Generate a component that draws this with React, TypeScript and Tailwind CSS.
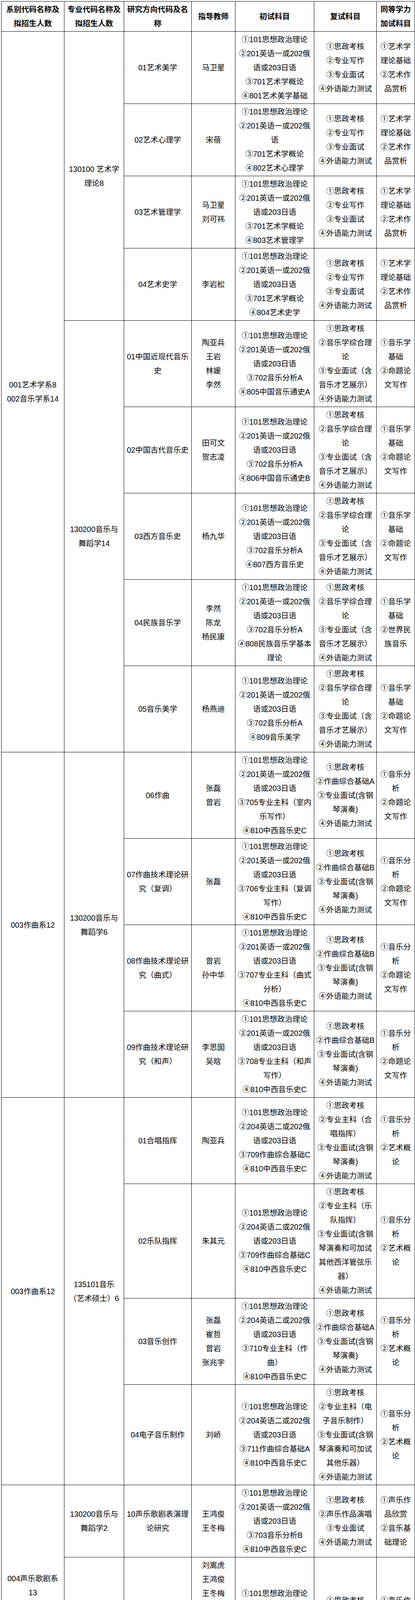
import React from 'react';

type Row = {
  dir: string[];
  teachers: string[];
  exam?: string[];
  retest?: string[];
  extra?: string[];
};

type Major = {
  name: string[];
  rows: Row[];
  shared?: { exam: string[]; retest: string[]; extra: string[] };
};

type Dept = { name: string[]; majors: Major[] };

const P1 = '①101思想政治理论';
const E1 = ['②201英语一或202俄', '语或203日语'];
const E2 = ['②204英语二或202俄', '语或203日语'];
const HIST = '④810中西音乐史C';

const ART_RE = ['①思政考核', '②专业写作', '③专业面试', '④外语能力测试'];
const ART_ADD = ['①艺术学', '理论基础', '②艺术作', '品赏析'];
const MUS_RE = ['①思政考核', '②音乐学综合理', '论', '③专业面试（含', '音乐才艺展示）', '④外语能力测试'];
const MUS_ADD = ['①音乐学', '基础', '②命题论', '文写作'];
const COMP_RE_A = ['①思政考核', '②作曲综合基础A', '③专业面试(含钢', '琴演奏)', '④外语能力测试'];
const COMP_RE_B = ['①思政考核', '②作曲综合基础B', '③专业面试(含钢', '琴演奏)', '④外语能力测试'];
const COMP_ADD = ['①音乐分', '析', '②命题论', '文写作'];
const MFA_ADD = ['①音乐分', '析', '②艺术概', '论'];
const VOC_RE = ['①思政考核', '②声乐作品演唱', '③专业面试', '④外语能力测试'];
const VOC_MFA_RE = ['①思政考核', '②专业主科（声', '乐演唱）', '③外语能力测试'];
const VOC_ADD = ['①声乐作', '品欣赏', '②音乐基', '础理论'];
const INS_RE = ['①思政考核', '②器乐作品演奏', '③专业面试', '④外语能力测试'];
const INS_MFA_RE = ['①思政考核', '②专业主科（器', '乐演奏）', '③外语能力测试'];
const INS_ADD = ['①器乐作', '品欣赏', '②音乐基', '础理论'];

const EXAM_B1 = [P1, ...E1, '③703音乐分析B', HIST];
const EXAM_B2 = [P1, ...E2, '③703音乐分析B', HIST];

const DEPTS: Dept[] = [
  {
    name: ['001艺术学系8', '002音乐学系14'],
    majors: [
      {
        name: ['130100 艺术学', '理论8'],
        rows: [
          { dir: ['01艺术美学'], teachers: ['马卫星'], exam: [P1, ...E1, '③701艺术学概论', '④801艺术美学基础'], retest: ART_RE, extra: ART_ADD },
          { dir: ['02艺术心理学'], teachers: ['宋蓓'], exam: [P1, '②201英语一或202俄', '语', '③701艺术学概论', '④802艺术心理学'], retest: ART_RE, extra: ART_ADD },
          { dir: ['03艺术管理学'], teachers: ['马卫星', '刘可祎'], exam: [P1, ...E1, '③701艺术学概论', '④803艺术管理学'], retest: ART_RE, extra: ART_ADD },
          { dir: ['04艺术史学'], teachers: ['李岩松'], exam: [P1, ...E1, '③701艺术学概论', '④804艺术史学'], retest: ART_RE, extra: ART_ADD },
        ],
      },
      {
        name: ['130200音乐与', '舞蹈学14'],
        rows: [
          { dir: ['01中国近现代音乐', '史'], teachers: ['陶亚兵', '王岩', '林媛', '李然'], exam: [P1, ...E1, '③702音乐分析A', '④805中国音乐通史A'], retest: MUS_RE, extra: MUS_ADD },
          { dir: ['02中国古代音乐史'], teachers: ['田可文', '贺志凌'], exam: [P1, ...E1, '③702音乐分析A', '④806中国音乐通史B'], retest: MUS_RE, extra: MUS_ADD },
          { dir: ['03西方音乐史'], teachers: ['杨九华'], exam: [P1, ...E1, '③702音乐分析A', '④807西方音乐史'], retest: MUS_RE, extra: MUS_ADD },
          { dir: ['04民族音乐学'], teachers: ['李然', '陈龙', '杨民康'], exam: [P1, ...E1, '③702音乐分析A', '④808民族音乐学基本', '理论'], retest: MUS_RE, extra: ['①音乐学', '基础', '②世界民', '族音乐'] },
          { dir: ['05音乐美学'], teachers: ['杨燕迪'], exam: [P1, ...E1, '③702音乐分析A', '④809音乐美学'], retest: MUS_RE, extra: MUS_ADD },
        ],
      },
    ],
  },
  {
    name: ['003作曲系12'],
    majors: [
      {
        name: ['130200音乐与', '舞蹈学6'],
        rows: [
          { dir: ['06作曲'], teachers: ['张磊', '曾岩'], exam: [P1, ...E1, '③705专业主科（室内', '乐写作）', HIST], retest: COMP_RE_A, extra: COMP_ADD },
          { dir: ['07作曲技术理论研', '究（复调）'], teachers: ['张磊'], exam: [P1, ...E1, '③706专业主科（复调', '写作）', HIST], retest: COMP_RE_B, extra: COMP_ADD },
          { dir: ['08作曲技术理论研', '究（曲式）'], teachers: ['曾岩', '孙中华'], exam: [P1, ...E1, '③707专业主科（曲式', '分析）', HIST], retest: COMP_RE_B, extra: COMP_ADD },
          { dir: ['09作曲技术理论研', '究（和声）'], teachers: ['李思囡', '吴晗'], exam: [P1, ...E1, '③708专业主科（和声', '写作）', HIST], retest: COMP_RE_B, extra: COMP_ADD },
        ],
      },
    ],
  },
  {
    name: ['003作曲系12'],
    majors: [
      {
        name: ['135101音乐', '（艺术硕士）6'],
        rows: [
          { dir: ['01合唱指挥'], teachers: ['陶亚兵'], exam: [P1, ...E2, '③709作曲综合基础C', HIST], retest: ['①思政考核', '②专业主科（合', '唱指挥）', '③专业面试(含钢', '琴演奏)', '④外语能力测试'], extra: MFA_ADD },
          { dir: ['02乐队指挥'], teachers: ['朱其元'], exam: [P1, ...E2, '③709作曲综合基础C', HIST], retest: ['①思政考核', '②专业主科（乐', '队指挥）', '③专业面试(含钢', '琴演奏和可加试', '其他西洋管弦乐', '器）', '④外语能力测试'], extra: MFA_ADD },
          { dir: ['03音乐创作'], teachers: ['张磊', '崔哲', '曾岩', '张兆宇'], exam: [P1, ...E2, '③710专业主科（作', '曲）', HIST], retest: COMP_RE_A, extra: MFA_ADD },
          { dir: ['04电子音乐制作'], teachers: ['刘峤'], exam: [P1, ...E2, '③711作曲综合基础A', HIST], retest: ['①思政考核', '②专业主科（电', '子音乐制作）', '③专业面试(含钢', '琴演奏和可加试', '其他乐器）', '④外语能力测试'], extra: MFA_ADD },
        ],
      },
    ],
  },
  {
    name: ['004声乐歌剧系', '13'],
    majors: [
      {
        name: ['130200音乐与', '舞蹈学2'],
        rows: [{ dir: ['10声乐歌剧表演理', '论研究'], teachers: ['王鸿俊', '王冬梅'], exam: EXAM_B1, retest: VOC_RE, extra: VOC_ADD }],
      },
      {
        name: ['135101音乐', '（艺术硕士）11'],
        rows: [
          {
            dir: ['05声乐演唱（美', '声）'],
            teachers: ['刘嵩虎', '王鸿俊', '王冬梅', '崔杰夫', '张渊春', '张金花', '李雷', '金虹', '赵碧波'],
            exam: EXAM_B2,
            retest: VOC_MFA_RE,
            extra: VOC_ADD,
          },
        ],
      },
    ],
  },
  {
    name: ['005民族声乐系8'],
    majors: [
      {
        name: ['130200音乐与', '舞蹈学2'],
        rows: [{ dir: ['11民族声乐表演理', '论研究'], teachers: ['谢艳丽', '栾岚'], exam: EXAM_B1, retest: VOC_RE, extra: VOC_ADD }],
      },
      {
        name: ['135101音乐', '（艺术硕士）6'],
        rows: [
          { dir: ['06声乐演唱（民', '声）'], teachers: ['谢艳丽', '张东', '栾岚', '王庆辉', '王邵玫'], exam: EXAM_B2, retest: VOC_MFA_RE, extra: VOC_ADD },
        ],
      },
    ],
  },
  {
    name: ['006管弦系19'],
    majors: [
      {
        name: ['130200音乐与', '舞蹈学6'],
        rows: [
          {
            dir: ['12舞蹈理论研究'],
            teachers: ['刘炼'],
            exam: [P1, ...E1, '③704舞蹈理论', '④811舞蹈作品分析'],
            retest: ['①思政考核', '②舞蹈剧目表演', '③专业面试', '④外语能力测试'],
            extra: ['①舞蹈学', '基础理论', '②舞蹈专', '业理论与', '素养'],
          },
          { dir: ['13管弦乐器表演理', '论研究'], teachers: ['李鑫'], exam: EXAM_B1, retest: INS_RE, extra: INS_ADD },
        ],
      },
      {
        name: ['135101音乐', '（艺术硕士）13'],
        shared: { exam: EXAM_B2, retest: INS_MFA_RE, extra: INS_ADD },
        rows: [
          { dir: ['07管弦乐器表演', '（圆号）'], teachers: ['林岩'] },
          { dir: ['08管弦乐器表演', '（双簧管）'], teachers: ['杨光'] },
          { dir: ['09管弦乐器表演', '（小提琴）'], teachers: ['张可涵'] },
          { dir: ['10管弦乐器表演', '（竖琴）'], teachers: ['高馥佳'] },
          { dir: ['11管弦乐器表演', '（大提琴）'], teachers: ['李鑫'] },
          { dir: ['12乐队演奏'], teachers: ['朱其元'] },
        ],
      },
    ],
  },
  {
    name: ['007民乐系18'],
    majors: [
      {
        name: ['130200音乐与', '舞蹈学1'],
        rows: [{ dir: ['14民族乐器表演理', '论研究'], teachers: ['许双毅'], exam: EXAM_B1, retest: INS_RE, extra: INS_ADD }],
      },
      {
        name: ['135101音乐', '（艺术硕士）17'],
        shared: { exam: EXAM_B2, retest: INS_MFA_RE, extra: INS_ADD },
        rows: [
          { dir: ['13民族乐器表演', '（二胡）'], teachers: ['姜克美', '王丹婷', '于秋阳'] },
          { dir: ['14民族乐器表演', '（扬琴）'], teachers: ['索帅'] },
          { dir: ['15民族乐器表演', '（琵琶）'], teachers: ['徐鑫'] },
          { dir: ['16民族乐器表演', '（笙）'], teachers: ['刘光辉'] },
          { dir: ['17民族乐器表演', '（竹笛）'], teachers: ['许双毅'] },
          { dir: ['18民族乐器表演', '（打击乐）'], teachers: ['肖贺元'] },
          { dir: ['19乐队演奏（唢', '呐，古筝，阮，三', '弦，柳琴）'], teachers: ['索帅'] },
        ],
      },
    ],
  },
  {
    name: ['008钢琴系11'],
    majors: [
      {
        name: ['130200音乐与', '舞蹈学1'],
        rows: [{ dir: ['15钢琴表演理论研', '究'], teachers: ['方弋'], exam: EXAM_B1, retest: INS_RE, extra: INS_ADD }],
      },
      {
        name: ['135101音乐', '（艺术硕士）10'],
        rows: [
          {
            dir: ['20钢琴表演'],
            teachers: ['元杰', '赵小红', '方弋', '杨欣', '石丹', '王瑛', '高威', '宋梦书', '许晓薇'],
            exam: EXAM_B2,
            retest: INS_MFA_RE,
            extra: INS_ADD,
          },
        ],
      },
    ],
  },
];

const HEADERS = [
  ['系别代码名称及', '拟招生人数'],
  ['专业代码名称及', '拟招生人数'],
  ['研究方向代码及名', '称'],
  ['指导教师'],
  ['初试科目'],
  ['复试科目'],
  ['同等学力', '加试科目'],
];

const cellCls = 'border border-black px-[3px] py-[2px] text-center align-middle';

// 每行固定 36px，避免中英文混排把行框撑高
function Lines({ lines }: { lines: string[] }) {
  return (
    <>
      {lines.map((l, i) => (
        <div key={i} className="h-[36px] overflow-visible whitespace-nowrap leading-[36px]">
          {l}
        </div>
      ))}
    </>
  );
}

function Cell({ lines, rowSpan }: { lines: string[]; rowSpan?: number }) {
  return (
    <td rowSpan={rowSpan} className={cellCls}>
      <Lines lines={lines} />
    </td>
  );
}

export default function App() {
  const rows: React.ReactNode[] = [];

  DEPTS.forEach((dept, di) => {
    const deptCount = dept.majors.reduce((n, m) => n + m.rows.length, 0);
    dept.majors.forEach((major, mi) => {
      major.rows.forEach((row, ri) => {
        const firstOfDept = mi === 0 && ri === 0;
        rows.push(
          <tr key={`${di}-${mi}-${ri}`}>
            {firstOfDept && <Cell lines={dept.name} rowSpan={deptCount} />}
            {ri === 0 && <Cell lines={major.name} rowSpan={major.rows.length} />}
            <Cell lines={row.dir} />
            <Cell lines={row.teachers} />
            {major.shared ? (
              ri === 0 && (
                <>
                  <Cell lines={major.shared.exam} rowSpan={major.rows.length} />
                  <Cell lines={major.shared.retest} rowSpan={major.rows.length} />
                  <Cell lines={major.shared.extra} rowSpan={major.rows.length} />
                </>
              )
            ) : (
              <>
                <Cell lines={row.exam ?? []} />
                <Cell lines={row.retest ?? []} />
                <Cell lines={row.extra ?? []} />
              </>
            )}
          </tr>,
        );
      });
    });
  });

  return (
    <div className="bg-white pl-[3px] pt-[3px] font-['Liberation_Sans','Noto_Sans_CJK_SC',sans-serif] text-[19.5px] leading-[36px] text-black">
      <table className="w-[1059px] table-fixed border-collapse">
        <colgroup>
          <col className="w-[161px]" />
          <col className="w-[153px]" />
          <col className="w-[173px]" />
          <col className="w-[112px]" />
          <col className="w-[202px]" />
          <col className="w-[160px]" />
          <col className="w-[98px]" />
        </colgroup>
        <thead>
          <tr>
            {HEADERS.map((h, i) => (
              <th key={i} className={`${cellCls} font-bold`}>
                <Lines lines={h} />
              </th>
            ))}
          </tr>
        </thead>
        <tbody>{rows}</tbody>
      </table>
    </div>
  );
}
